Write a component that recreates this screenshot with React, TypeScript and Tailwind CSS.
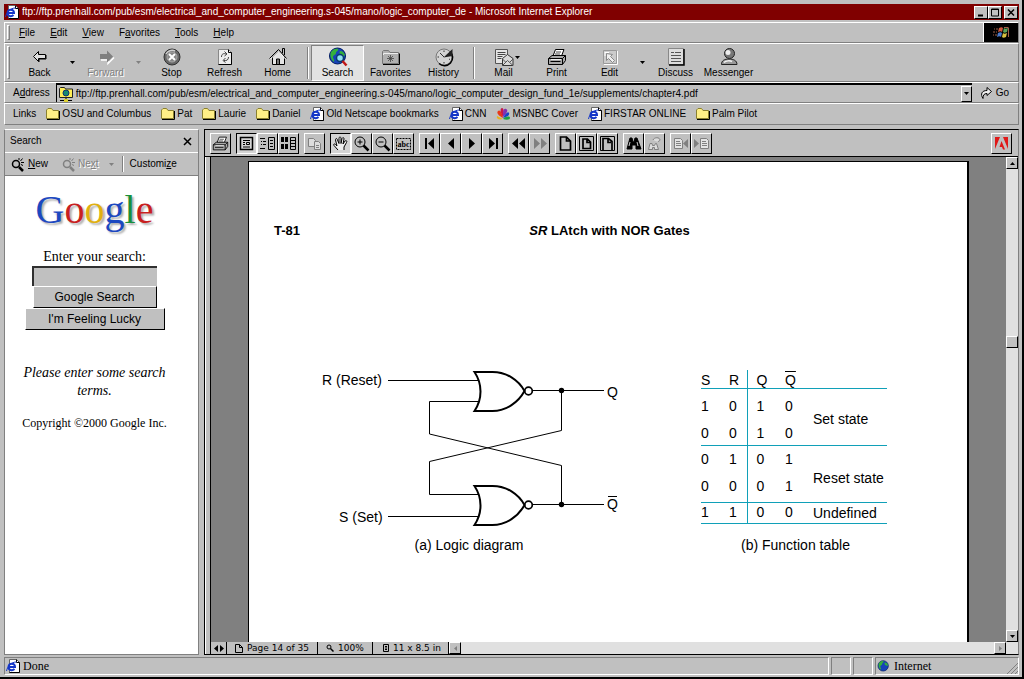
import type { ReactNode } from 'react'

const LOCATION =
  'ftp://ftp.prenhall.com/pub/esm/electrical_and_computer_engineering.s-045/mano/logic_computer_design_fund_1e/supplements/chapter4.pdf'
const TITLE =
  'ftp://ftp.prenhall.com/pub/esm/electrical_and_computer_engineering.s-045/mano/logic_computer_de - Microsoft Internet Explorer'

const raised = 'border border-t-white border-l-white border-r-black border-b-black bg-[#c0c0c0]'
const bar = 'flex shrink-0 items-center border border-t-white border-l-white border-r-[#808080] border-b-[#808080]'

/* ---------- icons ---------- */

function Icon({ size = 20, children }: { size?: number; children: ReactNode }) {
  return (
    <svg width={size} height={size} viewBox={`0 0 ${size} ${size}`} fill="none" stroke="#000" className="shrink-0" aria-hidden="true">
      {children}
    </svg>
  )
}

const BackIcon = () => (
  <Icon>
    <path d="M3.500 9.500 8.500 4.500v3h7v4h-7v3z" fill="#e0e0e0" />
    <path d="M9 15v-3h7V8" />
  </Icon>
)

const ForwardIcon = () => (
  <Icon>
    <path d="M18 10.500 12 16.500V13H5" stroke="#fff" strokeWidth="1.500" />
    <path d="M17 9.500 11 3.500V7H4v5h7v3.500z" fill="#808080" stroke="none" />
  </Icon>
)

const StopIcon = () => (
  <Icon>
    <circle cx="10" cy="10" r="8" fill="#686868" stroke="#303030" />
    <path d="M4 7a7 7 0 0 1 9-3" stroke="#d0d0d0" strokeWidth="1.500" />
    <circle cx="10" cy="10" r="5" fill="#858585" stroke="#aaa" />
    <path d="m7 7 6 6m0-6-6 6" stroke="#fff" strokeWidth="2" />
  </Icon>
)

const RefreshIcon = () => (
  <Icon>
    <path d="M3.500 2.500h10l3 3v12h-13z" fill="#eee" stroke="#888" />
    <path d="M16.500 5.500v12h-13M13.500 2.500v3h3" />
    <path d="M6.500 10c0-3 2-4 4.500-3M9.500 4.500 12 7 9.500 9M13.500 10c0 3-2 4-4.500 3.500M10.500 11 8 13.500l2.500 2" stroke="#444" />
  </Icon>
)

const HomeIcon = () => (
  <Icon>
    <path d="M4.500 10v7.500h12V10l-6-6z" fill="#e4e4e4" />
    <path d="M1.500 11.500 10.500 2.500l8 9M14.500 6V1.500h2V8" fill="none" />
    <path d="M2.500 12 10.500 4l7 8" stroke="#fff" />
    <path d="M8.500 17v-5h3v5" fill="#777" />
  </Icon>
)

function Globe({ size = 20, lens = false }: { size?: number; lens?: boolean }) {
  return (
    <svg width={size} height={size} viewBox="0 0 20 20" fill="none" className="shrink-0" aria-hidden="true">
      <circle cx="9.500" cy="9" r="8" fill="#1743b8" stroke="#001a60" />
      <path d="M3 5c2-3 5-4 7-3 1 2-2 2-2 4s-3 2-3 4 2 3 1 5C3 13 1.500 8 3 5zM12 4c3 0 4 2 5 4-1 2-3 0-4 0s-2-3-1-4z" fill="#34b03c" />
      {lens && (
        <>
          <circle cx="12" cy="11" r="3.500" fill="#8fe0f0" stroke="#083a70" strokeWidth="1.500" />
          <path d="m14.500 14 4 4.500" stroke="#c01818" strokeWidth="2.500" />
        </>
      )}
    </svg>
  )
}

const FavoritesIcon = () => (
  <Icon>
    <path d="M1.500 16.500v-12l1-1h5l1.500 2h8.500v11z" fill="#b0b0b0" stroke="#777" />
    <path d="M2 17.500h16.500v-11" />
    <path d="M2.500 8V6.500H17" stroke="#eee" />
    <path d="M9.500 8v7M6 11.500h7M7 9l5 5m0-5-5 5" stroke="#444" strokeWidth=".8" />
  </Icon>
)

const HistoryIcon = () => (
  <Icon>
    <circle cx="10" cy="10" r="8" fill="#d4d4d4" stroke="#777" />
    <path d="M16 4.500a8 8 0 0 1-11 12" strokeWidth="1.500" />
    <path d="M9.500 10.500 18.500 2v7z" fill="#222" stroke="none" />
    <path d="M10 10 6 6M10 3.500V5M3.500 10H5M10 15v1.500M15 12l1 .5" stroke="#333" />
  </Icon>
)

const MailIcon = () => (
  <Icon>
    <path d="M1.500 2.500h12v14h-12z" fill="#e4e4e4" stroke="#555" />
    <path d="M3.500 5.500h8M3.500 7.500h8M3.500 9.500h5M3.500 11.500h4" stroke="#444" />
    <path d="m8.500 18.500v-7l5-4 5.500 4v7z" fill="#d8d8d8" stroke="#333" />
    <path d="m8.500 18.500 5-5 5.500 5M8.500 12l3 3M19 12l-3 3" stroke="#555" />
  </Icon>
)

const PrinterIcon = ({ size = 20 }: { size?: number }) => (
  <svg width={size} height={size} viewBox="0 0 20 20" fill="none" stroke="#000" className="shrink-0" aria-hidden="true">
    <path d="m6 9 2.500-6.500H17L14.500 9z" fill="#fff" />
    <path d="M9 5h5M8 7h5" stroke="#444" />
    <path d="M1.500 11.500 5 8.500h13.500v5L15.500 17.500h-14z" fill="#a8a8a8" />
    <path d="M1.500 11.500h14l3-3M15.500 11.500v6M3.500 14.500h10" />
    <path d="M4 12.500h10" stroke="#eee" />
  </svg>
)

const EditIcon = () => (
  <Icon>
    <path d="M3.500 3.500h13v13h-13z" fill="#ccc" stroke="#999" />
    <path d="M17.500 4v13.500H4M5 5.500h4M5 5v4" stroke="#fff" />
    <path d="M6.500 6.500v7l2-2 4 4 2-2-4-4 2-2z" fill="#f0f0f0" stroke="#888" />
  </Icon>
)

const DiscussIcon = () => (
  <Icon>
    <path d="M2.500 1.500h15v16h-15z" fill="#ddd" stroke="#888" />
    <path d="M18 2v16H3" strokeWidth="1.500" />
    <path d="M5 5.500h3M5 8.500h10M5 11.500h10M9 5.500h6M5 14.500h10" stroke="#555" />
  </Icon>
)

const MessengerIcon = () => (
  <Icon>
    <path d="M2.500 17.500c0-4 3-5.500 7.500-5.500s8 1.500 8 5.500z" fill="#999" stroke="#222" />
    <circle cx="10.500" cy="6.500" r="5" fill="#777" stroke="#222" />
    <circle cx="9" cy="5.500" r="2.500" fill="#eee" stroke="none" />
    <path d="M5 15.500c2-2 6-2 8-1" stroke="#f4f4f4" strokeWidth="1.500" />
  </Icon>
)

const Folder = () => (
  <svg width="14" height="14" viewBox="0 0 14 14" className="shrink-0" aria-hidden="true">
    <path d="M1 12.500h12.500V4" fill="none" stroke="#000" />
    <path d="M.5 11.500V3L2 1.500h3.500L7 3.500h5.500v8z" fill="#ffef86" stroke="#8a8030" />
  </svg>
)

const IePage = () => (
  <svg width="14" height="14" viewBox="0 0 14 14" fill="none" className="shrink-0" aria-hidden="true">
    <path d="M3.500.500h7l3 3v10h-10z" fill="#fff" stroke="#666" />
    <path d="M13.500 3.500v10h-10M10.500.500v3h3" stroke="#000" />
    <path d="M2.500 8h6.500c0-4-6-4.500-6.500 0 0 3.500 4 4 6 2" stroke="#1436c8" strokeWidth="2" />
    <path d="M.5 12c1-5 5-9 10-9" stroke="#1436c8" />
  </svg>
)

const Peacock = () => (
  <svg width="14" height="14" viewBox="0 0 14 14" className="shrink-0" aria-hidden="true">
    <path d="M7 12C3 13 0 12 1 9l6 3z" fill="#e8b020" />
    <path d="M7 11C3 9 0 6 2 4s4 2 5 7z" fill="#e83818" />
    <path d="M7 10C4 5 4 1 6 1s2 4 1 9z" fill="#c81848" />
    <path d="M7 10c0-5 0-9 3-8s0 5-3 8z" fill="#8030b0" />
    <path d="M7 11c2-4 5-7 6-5s-2 4-6 5z" fill="#1840c8" />
    <path d="M7 12c3-3 7-3 7-1s-4 2-7 1z" fill="#20a040" />
  </svg>
)

const FtpFolder = () => (
  <svg width="16" height="16" viewBox="0 0 16 16" className="shrink-0" aria-hidden="true">
    <path d="M1.500 11.500V2.500l1-1h4l1 1.500h7v8.500z" fill="#ffee55" stroke="#222" />
    <circle cx="8" cy="7" r="3" fill="#168a70" stroke="#103070" />
    <path d="M8 12v2M2 14.500h12" stroke="#000" />
    <path d="M6 13h4v3H6z" fill="#ddd030" />
  </svg>
)

const Flag = () => (
  <svg width="18" height="16" viewBox="0 0 18 16" aria-hidden="true">
    <path d="M7 3c2-1 3-1 4 0l-1 4c-1-1-2-1-4 0z" fill="#d0583c" />
    <path d="M12 3c1 1 2 1 4 0l-1 4c-2 1-3 1-4 0z" fill="#58a058" />
    <path d="M6 8c2-1 3-1 4 0l-1 4c-1-1-2-1-4 0z" fill="#4878c8" />
    <path d="M11 8c1 1 2 1 4 0l-1 4c-2 1-3 1-4 0z" fill="#d8c040" />
    <path d="M2 4h1M4 4h2M1 7h2M4 7h1M1 10h1M3 10h2M12 2.500h4.500M16.500 3v9" stroke="#a06048" />
  </svg>
)

const Lens = ({ muted = false }: { muted?: boolean }) => (
  <svg width="14" height="15" viewBox="0 0 14 15" fill="none" stroke={muted ? '#808080' : '#000'} className="shrink-0" aria-hidden="true">
    <circle cx="5" cy="7" r="3.500" strokeWidth="1.500" />
    <path d="m8 10 4 4" strokeWidth="2.500" />
    <path d="M8 1v2M11.500 1.500l-2 2.500M10 5.500h3M10 7.500l2 1" />
  </svg>
)

function Caret({ muted = false, className = '' }: { muted?: boolean; className?: string }) {
  return (
    <svg width="5" height="3" viewBox="0 0 5 3" fill={muted ? '#808080' : '#000'} className={className} aria-hidden="true">
      <path d="M0 0h5L2.500 3z" />
    </svg>
  )
}

function Arrow({ d, muted = false }: { d: string; muted?: boolean }) {
  return (
    <svg width="7" height="7" viewBox="0 0 7 7" fill={muted ? '#808080' : '#000'} aria-hidden="true">
      <path d={d} />
    </svg>
  )
}

/* ---------- browser chrome ---------- */

function Grip() {
  return <span className="mx-[2px] h-[calc(100%-4px)] w-[3px] shrink-0 border border-t-white border-r-[#808080] border-b-[#808080] border-l-white" />
}

function Divider() {
  return (
    <div className="flex w-[7px] shrink-0 justify-center">
      <span className="h-8 w-[2px] border-r border-l border-r-white border-l-[#808080]" />
    </div>
  )
}

function MenuItem({ before = '', hot, after }: { before?: string; hot: string; after: string }) {
  return (
    <button className="px-[7px]">
      {before}
      <u>{hot}</u>
      {after}
    </button>
  )
}

interface ToolProps {
  label: string
  icon: ReactNode
  muted?: boolean
  active?: boolean
  caret?: boolean
}

function Tool({ label, icon, muted, active, caret }: ToolProps) {
  return (
    <button
      className={`relative flex h-9 w-[53px] shrink-0 flex-col items-center border pt-[1px] leading-3 ${
        active ? 'border-t-[#808080] border-r-white border-b-white border-l-[#808080] bg-[#e2e2e2]' : 'border-transparent'
      } ${muted ? 'text-[#808080] [text-shadow:1px_1px_#fff]' : ''}`}
    >
      {icon}
      <span>{label}</span>
      {caret && <Caret className="absolute top-[10px] right-[9px]" />}
    </button>
  )
}

function DropButton({ label, muted }: { label: string; muted?: boolean }) {
  return (
    <button aria-label={label} className="flex h-9 w-[13px] shrink-0 items-center justify-center">
      <Caret muted={muted} />
    </button>
  )
}

function Bookmark({ icon, children }: { icon: ReactNode; children: ReactNode }) {
  return (
    <a href="#" className="flex shrink-0 items-center gap-[2px]">
      {icon}
      {children}
    </a>
  )
}

function WindowButton({ label, children }: { label: string; children: ReactNode }) {
  return (
    <button aria-label={label} className={`flex h-[13px] w-[14px] items-center justify-center ${raised}`}>
      <svg width="10" height="9" viewBox="0 0 10 9" fill="none" stroke="#000" aria-hidden="true">
        {children}
      </svg>
    </button>
  )
}

/* ---------- search pane ---------- */

function SearchPane() {
  return (
    <aside className="flex w-[195px] shrink-0 flex-col border border-[#808080] border-t-white bg-white">
      <div className="flex h-[22px] shrink-0 items-center justify-between bg-[#c0c0c0] pr-[6px] pl-[5px]">
        <span>Search</span>
        <button aria-label="Close search pane">
          <svg width="9" height="9" viewBox="0 0 9 9" stroke="#000" strokeWidth="1.500" aria-hidden="true">
            <path d="m1 1 7 7m0-7-7 7" />
          </svg>
        </button>
      </div>
      <div className="flex h-6 shrink-0 items-center border-t border-b border-t-white border-b-[#808080] bg-[#c0c0c0] pl-[6px]">
        <button className="flex items-center gap-[3px]">
          <Lens />
          <span>
            <u>N</u>ew
          </span>
        </button>
        <button className="ml-[14px] flex items-center gap-[2px] text-[#808080] [text-shadow:1px_1px_#fff]">
          <Lens muted />
          <span>
            Ne<u>x</u>t
          </span>
        </button>
        <Caret muted className="ml-[10px]" />
        <span className="mr-[6px] ml-2 h-4 w-[2px] border-r border-l border-r-white border-l-[#808080]" />
        <button>
          Customi<u>z</u>e
        </button>
      </div>

      <form className="flex flex-col items-center pt-[8px] pr-[14px] font-['Liberation_Serif',serif]" onSubmit={e => e.preventDefault()}>
        <div className="flex text-[40px] leading-[52px] [text-shadow:2px_2px_2px_#b0b0b0]">
          <span className="text-[#1c48c0]">G</span>
          <span className="text-[#c82020]">o</span>
          <span className="text-[#e0b010]">o</span>
          <span className="text-[#1c48c0]">g</span>
          <span className="text-[#18903c]">l</span>
          <span className="text-[#c82020]">e</span>
        </div>
        <label htmlFor="q" className="mt-3 text-[14px] leading-[18px]">
          Enter your search:
        </label>
        <input
          id="q"
          className="h-5 w-[125px] border-t-2 border-l-2 border-t-[#303030] border-l-[#303030] bg-[#c0c0c0] px-1 outline-none"
        />
        <button className={`h-[22px] w-[124px] font-['Liberation_Sans',sans-serif] text-[12px] ${raised}`}>Google Search</button>
        <button className={`h-[22px] w-[140px] font-['Liberation_Sans',sans-serif] text-[12px] ${raised}`}>I'm Feeling Lucky</button>
        <p className="mt-[34px] w-[160px] text-center text-[14px] leading-[18px] italic">Please enter some search terms.</p>
        <p className="mt-[14px] text-[12px] leading-[18px]">Copyright ©2000 Google Inc.</p>
      </form>
    </aside>
  )
}

/* ---------- document viewer ---------- */

interface ViewerButton {
  label: string
  art: ReactNode
  pressed?: boolean
}

const mutedDoc = (
  <g stroke="#808080">
    <path d="M2.500 3.500h6l2 2v8h-8zM4 6.500h4M4 8.500h5M4 10.500h5" fill="#e4e4e4" />
  </g>
)

const viewerGroups: ViewerButton[][] = [
  [{ label: 'Print', art: <PrinterIcon size={17} /> }],
  [
    {
      label: 'Page only',
      pressed: true,
      art: (
        <>
          <path d="M2.500 2.500h12v12h-12z" strokeWidth="1.500" />
          <path d="M5 5.500h7M5 7.500h2M5 9.500h2M5 12h7M8.500 7.500h3v2h-3z" />
        </>
      ),
    },
    {
      label: 'Bookmarks and page',
      art: <path d="M1 3.500h5M2 6.500h1M4 6.500h3M2 9.500h1M4 9.500h3M1 13.500h5M9.500 2.500h6v12h-6zM11 5.500h3M11 8.500h3M11 11.500h3" />,
    },
    {
      label: 'Thumbnails and page',
      art: (
        <>
          <path d="M1 2h3v5H1zM5 2h3v5H5zM1 9h3v5H1zM5 9h3v5H5z" fill="#000" stroke="none" />
          <path d="M10.500 2.500h5v12h-5zM11 5.500h4M11 8.500h4M11 11.500h4" />
        </>
      ),
    },
  ],
  [
    {
      label: 'Copy',
      art: (
        <g stroke="#808080" fill="#ddd">
          <path d="M2.500 3.500h5l2 2v6h-7z" />
          <path d="M8.500 6.500h4l2 2v6h-6zM10 10.500h3M10 12.500h3" />
        </g>
      ),
    },
  ],
  [
    {
      label: 'Hand',
      pressed: true,
      art: <path d="M6 15 2 10.500c-1-2 1-2 2-.500L5 11 3.500 5c0-2 1.500-2 2 0L7 8.500 7 3.500c0-2 2-2 2 0v5l1-5c1-1.500 2-1 2 .5l-1 5 2-3c1-1 2.500 0 1.500 1.500L12 12v3" fill="#eee" />,
    },
    {
      label: 'Zoom in',
      art: (
        <>
          <circle cx="7" cy="7" r="5" />
          <path d="M4.500 7h5M7 4.500v5" />
          <path d="m10.500 10.500 5 5" strokeWidth="2.500" />
        </>
      ),
    },
    {
      label: 'Zoom out',
      art: (
        <>
          <circle cx="7" cy="7" r="5" />
          <path d="M4.500 7h5" />
          <path d="m10.500 10.500 5 5" strokeWidth="2.500" />
        </>
      ),
    },
    {
      label: 'Select text',
      art: (
        <>
          <path d="M1.500 3.500h14v11h-14z" strokeDasharray="2 1" />
          <text x="8.500" y="12" textAnchor="middle" fontSize="8" fill="#000" stroke="none" className="font-['Liberation_Serif',serif] font-bold">
            abc
          </text>
        </>
      ),
    },
  ],
  [
    { label: 'First page', art: <path d="M4 3h2v11H4zM13 3v11L7 8.500z" fill="#000" stroke="none" /> },
    { label: 'Previous page', art: <path d="M12 3v11L6 8.500z" fill="#000" stroke="none" /> },
    { label: 'Next page', art: <path d="M6 3v11l6-5.500z" fill="#000" stroke="none" /> },
    { label: 'Last page', art: <path d="M12 3h2v11h-2zM5 3v11l6-5.500z" fill="#000" stroke="none" /> },
  ],
  [
    { label: 'Go back', art: <path d="M8 3v11L2 8.500zM15 3v11L9 8.500z" fill="#000" stroke="none" /> },
    { label: 'Go forward', art: <path d="M3 3v11l6-5.500zM10 3v11l6-5.500z" fill="#808080" stroke="none" /> },
  ],
  [
    { label: 'Actual size', art: <path d="M3.500 2h6l4 4v9h-10zM9.500 2v4h4" strokeWidth="1.700" /> },
    {
      label: 'Fit page',
      art: (
        <>
          <path d="M1.500 1.500h14v14h-14z" />
          <path d="M5 4h4.500L12.500 7v6.500H5zM9 4v3.500h3" strokeWidth="1.700" />
        </>
      ),
    },
    {
      label: 'Fit width',
      art: (
        <>
          <path d="M1.500 1.500h14v14h-14z" />
          <path d="M4 15.500V3.500h5.500l3.500 3v9M9 4v3.500h3" strokeWidth="1.700" />
        </>
      ),
    },
  ],
  [
    {
      label: 'Find',
      art: (
        <>
          <path d="M5 3h2l1 4h1l1-4h2l4 11h-5v-4H7v4H2z" fill="#000" />
          <path d="m4 11 1-4M13 11l-1-4" stroke="#ccc" />
        </>
      ),
    },
    {
      label: 'Search',
      art: <path d="M2.500 14.500 4 8.500h2l.5 2h2l1-2h1l2 6h-4v-2h-2v2zM7 5c1-3 7-3 7 0 0 1-2 1-2 2" stroke="#808080" fill="#ddd" />,
    },
  ],
  [
    {
      label: 'Previous highlight',
      art: (
        <>
          {mutedDoc}
          <path d="M16 4v9l-5-4.500z" fill="#808080" stroke="none" />
        </>
      ),
    },
    {
      label: 'Next highlight',
      art: (
        <>
          <path d="M1 4v9l5-4.500z" fill="#808080" stroke="none" />
          <g transform="translate(5 0)">{mutedDoc}</g>
        </>
      ),
    },
  ],
]

function ViewerToolbar() {
  return (
    <div className="flex h-[27px] shrink-0 items-center gap-[5px] border-b border-black bg-[#c0c0c0] pr-[6px] pl-[5px]">
      {viewerGroups.map((group, i) => (
        <div key={i} className="flex">
          {group.map(({ label, art, pressed }) => (
            <button
              key={label}
              aria-label={label}
              className={`flex size-[21px] items-center justify-center border ${
                pressed
                  ? 'border-t-black border-r-white border-b-white border-l-black bg-[#d4d4d4]'
                  : 'border-t-white border-r-black border-b-black border-l-white'
              }`}
            >
              <Icon size={17}>{art}</Icon>
            </button>
          ))}
        </div>
      ))}
      <button aria-label="Adobe" className={`ml-auto flex size-[21px] items-center justify-center ${raised}`}>
        <svg width="15" height="13" viewBox="0 0 15 13" fill="#e01818" aria-hidden="true">
          <path d="M1 0h5L1 12zM9 0h5v12zM7.500 4l3.500 8.500H9L8 10H5.500z" />
        </svg>
      </button>
    </div>
  )
}

function NorGate({ y }: { y: number }) {
  return (
    <g transform={`translate(0 ${y})`}>
      <path d="M473.500 7h18c14 0 26 8 32 19-6 11-18 20-32 20h-18c8-12 8-27 0-39z" strokeWidth="2" />
      <circle cx="527.500" cy="26" r="3.800" strokeWidth="1.700" />
      <path d="M531.500 25.500H603" />
      <circle cx="560.500" cy="25.500" r="2.700" fill="#000" stroke="none" />
    </g>
  )
}

function LogicDiagram() {
  return (
    <figure className="text-center">
      <svg width="300" height="170" viewBox="318 365 300 170" fill="none" stroke="#000" role="img" aria-label="Logic diagram">
        <NorGate y={365} />
        <NorGate y={479} />
        <path d="M387 380.500h91M478 401.500h-49.500v32.500l132 31.500V504M560.500 391v39.500l-132 31V494.500H478M387 516.500h91" />
        <g fill="#000" stroke="none" fontSize="14">
          <text x="321" y="385">R (Reset)</text>
          <text x="338" y="522">S (Set)</text>
          <text x="606" y="397">Q</text>
          <text x="606" y="509">Q</text>
        </g>
        <path d="M607 496.500h9" />
      </svg>
      <figcaption className="leading-5">(a) Logic diagram</figcaption>
    </figure>
  )
}

interface Row {
  bits: string[]
  state?: string
  style: string
  stateStyle?: string
  span?: number
}

const rows: Row[] = [
  { bits: ['1', '0', '1', '0'], state: 'Set state', span: 2, style: 'h-[31px] *:pt-1' },
  { bits: ['0', '0', '1', '0'], style: 'h-[26px] *:pt-[2px] border-b border-[#10a0b8]' },
  { bits: ['0', '1', '0', '1'], state: 'Reset state', span: 2, style: 'h-[27px]', stateStyle: 'pt-2' },
  { bits: ['0', '0', '0', '1'], style: 'h-[30px] *:pb-[3px] border-b border-[#10a0b8]' },
  { bits: ['1', '1', '0', '0'], state: 'Undefined', span: 1, style: 'h-[21px] *:pb-[2px] border-b border-[#10a0b8]', stateStyle: 'pt-[2px]' },
]

const columns = ['w-[28px]', 'w-[18px] border-r border-[#10a0b8]', 'w-[37px] pl-[9px]', 'w-[29px] pl-[1px]']

function FunctionTable() {
  return (
    <figure className="pt-[5px]">
      <table className="w-[186px] border-collapse text-left leading-4 whitespace-nowrap">
        <thead>
          <tr className="h-[18px] border-b border-[#10a0b8] *:pt-[2px]">
            {['S', 'R', 'Q'].map((name, i) => (
              <th key={name} className={`font-normal ${columns[i]}`}>
                {name}
              </th>
            ))}
            <th className={`font-normal ${columns[3]}`}>
              <span className="overline">Q</span>
            </th>
            <th aria-label="State" />
          </tr>
        </thead>
        <tbody>
          {rows.map(({ bits, state, style, stateStyle = '', span }, r) => (
            <tr key={r} className={style}>
              {bits.map((bit, c) => (
                <td key={c} className={columns[c]}>
                  {bit}
                </td>
              ))}
              {state && (
                <td rowSpan={span} className={stateStyle}>
                  {state}
                </td>
              )}
            </tr>
          ))}
        </tbody>
      </table>
      <figcaption className="mt-[11px] pl-10 leading-5">(b) Function table</figcaption>
    </figure>
  )
}

function DocumentPage() {
  return (
    <div className="min-w-0 flex-1 overflow-hidden bg-[#808080] px-[37px] pt-[4px]">
      <article className="h-full overflow-hidden border-t border-r-2 border-l border-black bg-white text-[14px]">
        <header className="grid grid-cols-[1fr_auto_1fr] pt-[59px] pl-[25px] text-[13px] leading-5 font-bold">
          <span>T-81</span>
          <h1 className="pr-[22px]">
            <i>SR</i> LAtch with NOR Gates
          </h1>
        </header>
        <div className="flex gap-[82px] pt-[124px] pl-[70px]">
          <LogicDiagram />
          <FunctionTable />
        </div>
      </article>
    </div>
  )
}

function DocumentPane() {
  return (
    <main className="ml-[5px] flex min-w-0 flex-1 flex-col border border-black border-r-[#808080]">
      <ViewerToolbar />
      <div className="flex min-h-0 flex-1">
        <div className="w-[6px] shrink-0 border-r border-l border-r-black border-l-white bg-[#c0c0c0]" />
        <div className="flex min-w-0 flex-1 flex-col">
          <div className="flex min-h-0 flex-1">
            <DocumentPage />
            <div className="flex w-3 shrink-0 flex-col bg-[#e0e0e0]">
              <button aria-label="Scroll up" className={`flex h-3 items-center justify-center ${raised}`}>
                <Arrow d="M3.500 2 6 5H1z" />
              </button>
              <div className="flex-[167]" />
              <div className={`h-3 ${raised}`} />
              <div className="flex-[283]" />
              <button aria-label="Scroll down" className={`flex h-3 items-center justify-center ${raised}`}>
                <Arrow d="M3.500 5 6 2H1z" />
              </button>
            </div>
          </div>
          <div className="flex h-3 shrink-0 bg-[#e0e0e0] font-['DejaVu_Sans',sans-serif] text-[9px] leading-3">
            <div className="flex bg-[#c0c0c0] *:border-r *:border-black">
              <button aria-label="Resize pane" className="flex w-4 items-center justify-center">
                <svg width="10" height="7" viewBox="0 0 10 7" aria-hidden="true">
                  <path d="M4 0v7L0 3.500zM6 0v7l4-3.500z" />
                </svg>
              </button>
              <button className="flex w-[91px] items-center gap-1 pl-2">
                <svg width="8" height="9" viewBox="0 0 8 9" fill="none" stroke="#000" aria-hidden="true">
                  <path d="M.5.500h4l3 3v5h-7zM4.500.500v3h3" />
                </svg>
                Page 14 of 35
              </button>
              <button className="flex w-[55px] items-center gap-1 pl-2">
                <svg width="8" height="8" viewBox="0 0 8 8" fill="none" stroke="#000" aria-hidden="true">
                  <circle cx="3" cy="3" r="2" />
                  <path d="m4.500 4.500 3 3" strokeWidth="1.500" />
                </svg>
                100%
              </button>
              <button className="flex w-[76px] items-center gap-1 pl-[10px]">
                <svg width="6" height="8" viewBox="0 0 6 8" fill="none" stroke="#000" aria-hidden="true">
                  <path d="M.5.500h5v7h-5zM2 2.500h2M2 4h2M2 5.500h2" />
                </svg>
                11 x 8.5 in
              </button>
            </div>
            <button aria-label="Scroll left" className={`flex w-3 items-center justify-center ${raised}`}>
              <Arrow muted d="M5 1v5L2 3.500z" />
            </button>
            <button aria-label="Scroll right" className={`mr-3 ml-auto flex w-3 items-center justify-center ${raised}`}>
              <Arrow muted d="M2 1v5l3-2.500z" />
            </button>
          </div>
        </div>
      </div>
    </main>
  )
}

export default function App() {
  return (
    <div className="flex h-screen flex-col overflow-hidden border-r-2 border-b-2 border-black bg-[#c0c0c0] pt-[4px] pr-[3px] pb-[2px] pl-[4px] font-['Liberation_Sans',Arial,sans-serif] text-[10px] leading-3 whitespace-nowrap text-black">
      <header className="mb-[2px] flex h-4 shrink-0 items-center gap-[3px] bg-[#800000] px-[1px] text-white">
        <IePage />
        <h1 className="min-w-0 flex-1 truncate">{TITLE}</h1>
        <div className="flex">
          <WindowButton label="Minimize">
            <path d="M2 7.500h5" strokeWidth="2" />
          </WindowButton>
          <WindowButton label="Restore">
            <path d="M1.500 1h7v7h-7zM1 1.500h8" />
          </WindowButton>
          <span className="w-[2px]" />
          <WindowButton label="Close">
            <path d="m2 1.500 6 6m0-6-6 6" strokeWidth="1.500" />
          </WindowButton>
        </div>
      </header>

      <nav className={`${bar} h-[21px]`}>
        <Grip />
        <div className="flex flex-1 gap-[1px]">
          <MenuItem hot="F" after="ile" />
          <MenuItem hot="E" after="dit" />
          <MenuItem hot="V" after="iew" />
          <MenuItem before="F" hot="a" after="vorites" />
          <MenuItem hot="T" after="ools" />
          <MenuItem hot="H" after="elp" />
        </div>
        <div className="flex h-full w-[35px] items-center justify-center border-l border-white bg-black">
          <Flag />
        </div>
      </nav>

      <div className={`${bar} h-[39px]`}>
        <Grip />
        <span className="w-[1px]" />
        <Tool label="Back" icon={<BackIcon />} />
        <DropButton label="Back history" />
        <Tool label="Forward" icon={<ForwardIcon />} muted />
        <DropButton label="Forward history" muted />
        <Tool label="Stop" icon={<StopIcon />} />
        <Tool label="Refresh" icon={<RefreshIcon />} />
        <Tool label="Home" icon={<HomeIcon />} />
        <Divider />
        <Tool label="Search" icon={<Globe lens />} active />
        <Tool label="Favorites" icon={<FavoritesIcon />} />
        <Tool label="History" icon={<HistoryIcon />} />
        <Divider />
        <Tool label="Mail" icon={<MailIcon />} caret />
        <Tool label="Print" icon={<PrinterIcon />} />
        <Tool label="Edit" icon={<EditIcon />} />
        <DropButton label="Edit with" />
        <Tool label="Discuss" icon={<DiscussIcon />} />
        <Tool label="Messenger" icon={<MessengerIcon />} />
      </div>

      <div className={`${bar} h-[21px] pl-2`}>
        <label htmlFor="address">
          A<u>d</u>dress
        </label>
        <div className="ml-[6px] flex h-[19px] min-w-0 flex-1 items-center border-t-2 border-l border-black pl-[1px]">
          <FtpFolder />
          <input id="address" defaultValue={LOCATION} className="ml-[2px] min-w-0 flex-1 bg-transparent outline-none" />
          <button aria-label="Address history" className={`flex h-4 w-[11px] items-center justify-center ${raised}`}>
            <Caret />
          </button>
        </div>
        <button className="flex w-[46px] items-center justify-center gap-1">
          <svg width="11" height="12" viewBox="0 0 11 12" fill="#eee" stroke="#000" aria-hidden="true">
            <path d="M2 11.500C-1 7 1 3.500 6 3.500v-3l4.500 4L6 8.500v-2C3 6.500 2 8 2 11.500z" />
          </svg>
          Go
        </button>
      </div>

      <nav className={`${bar} mb-[4px] h-[22px] gap-[10px] pl-2`}>
        <span>Links</span>
        <Bookmark icon={<Folder />}>OSU and Columbus</Bookmark>
        <Bookmark icon={<Folder />}>Pat</Bookmark>
        <Bookmark icon={<Folder />}>Laurie</Bookmark>
        <Bookmark icon={<Folder />}>Daniel</Bookmark>
        <Bookmark icon={<IePage />}>Old Netscape bookmarks</Bookmark>
        <Bookmark icon={<IePage />}>CNN</Bookmark>
        <Bookmark icon={<Peacock />}>MSNBC Cover</Bookmark>
        <Bookmark icon={<IePage />}>FIRSTAR ONLINE</Bookmark>
        <Bookmark icon={<Folder />}>Palm Pilot</Bookmark>
      </nav>

      <div className="flex min-h-0 flex-1 whitespace-normal">
        <SearchPane />
        <DocumentPane />
      </div>

      <footer className="mt-[2px] flex h-[18px] shrink-0 gap-[2px] font-['Liberation_Serif',serif] text-[12px] *:border *:border-t-[#808080] *:border-r-white *:border-b-white *:border-l-[#808080]">
        <div className="flex flex-1 items-center gap-[3px] pl-[1px]">
          <IePage />
          Done
        </div>
        <div className="w-5" />
        <div className="w-5" />
        <div className="flex w-[144px] items-center gap-1 pl-[1px]">
          <Globe size={13} />
          <span className="flex-1">Internet</span>
          <svg width="12" height="12" viewBox="0 0 12 12" stroke="#808080" className="self-end" aria-hidden="true">
            <path d="M1 12 12 1M5 12l7-7M9 12l3-3" />
          </svg>
        </div>
      </footer>
    </div>
  )
}
